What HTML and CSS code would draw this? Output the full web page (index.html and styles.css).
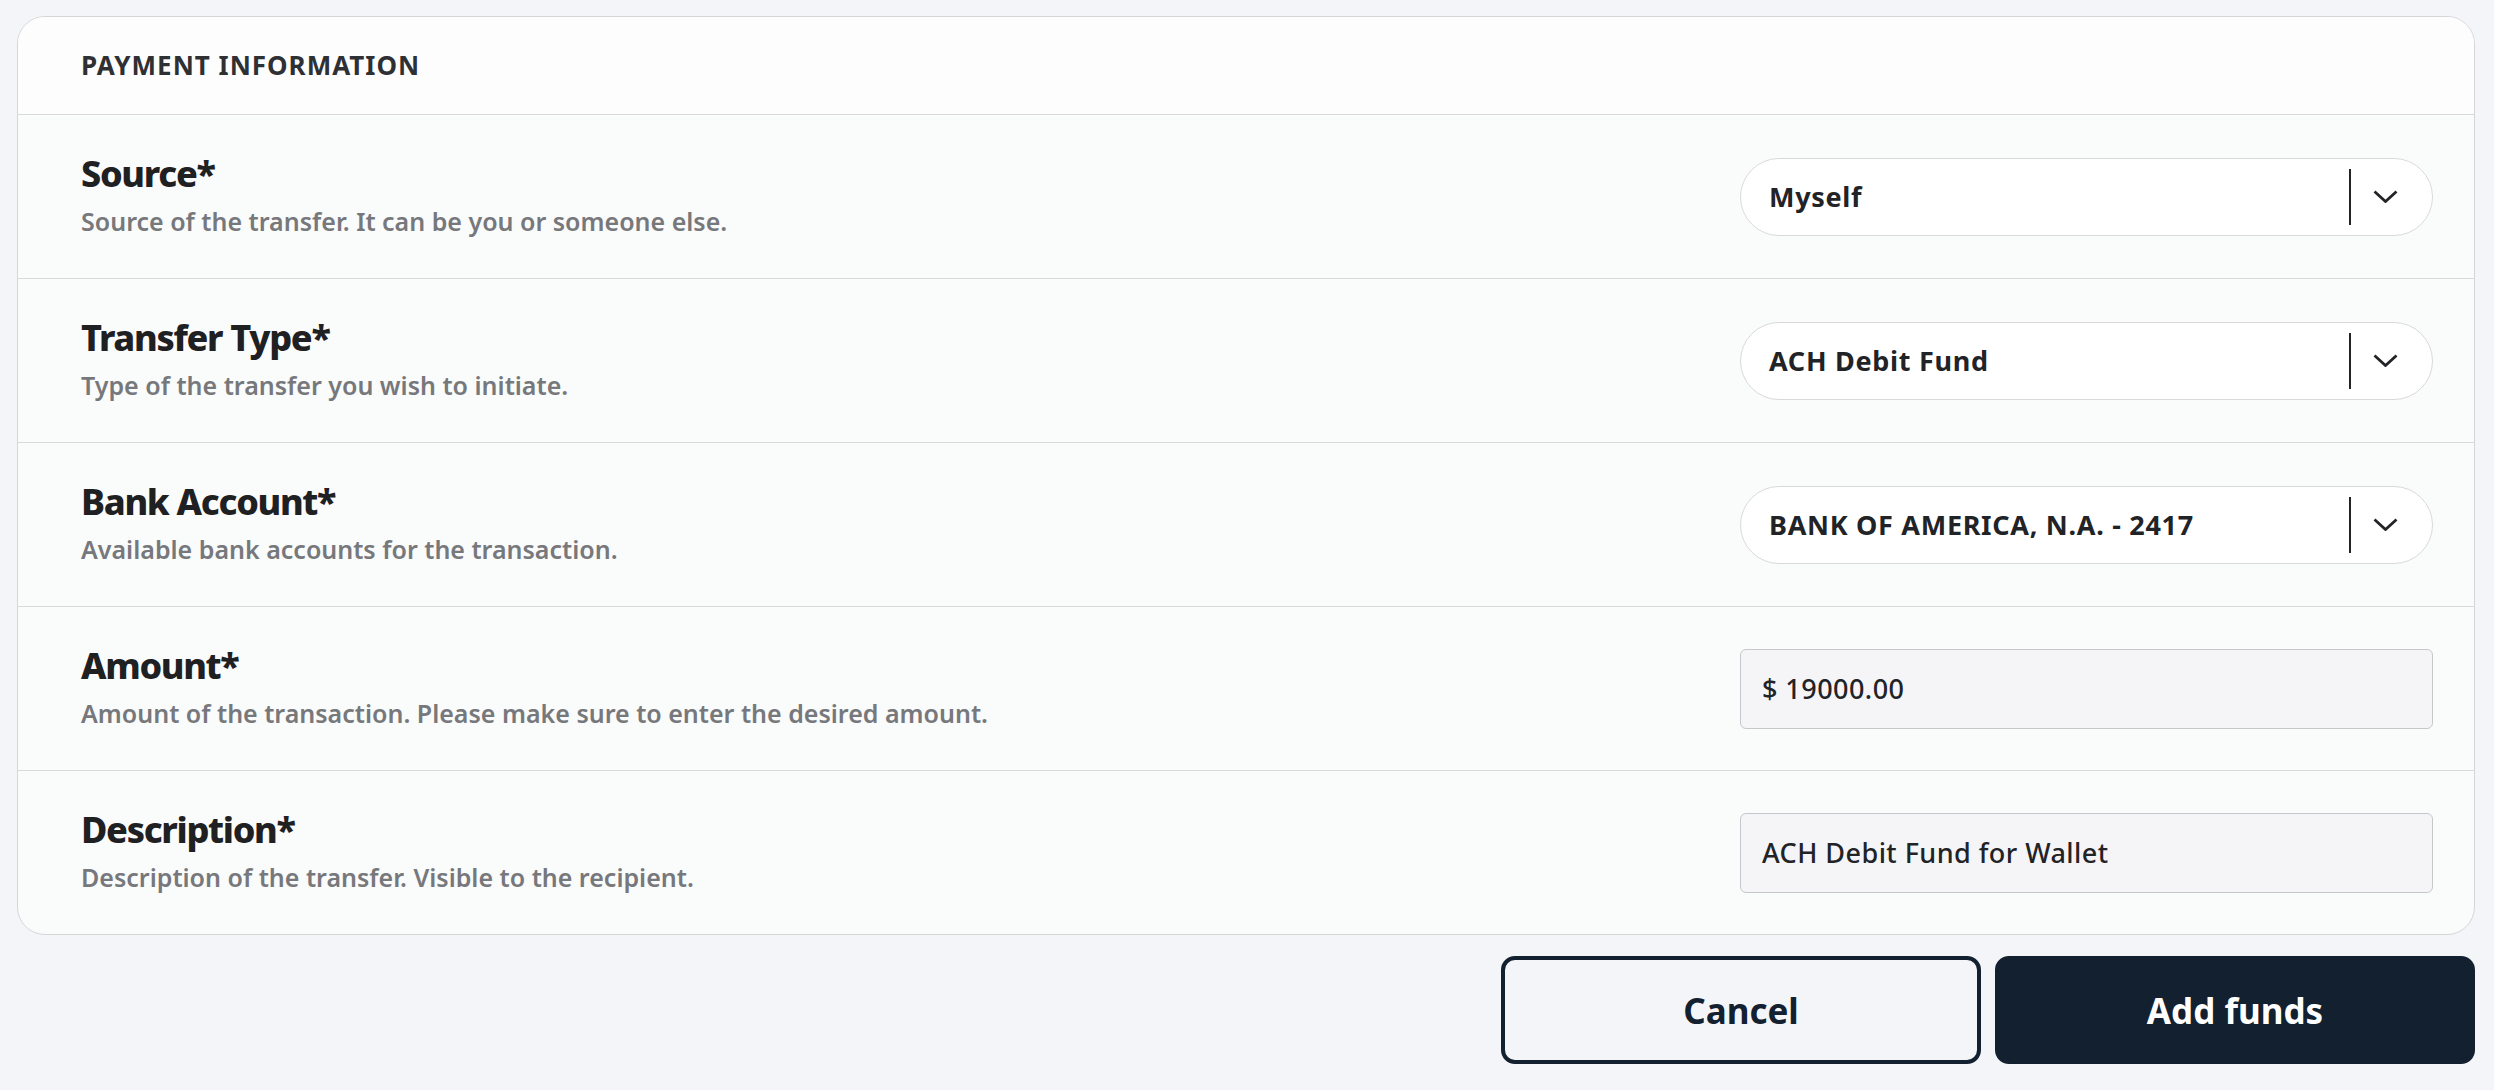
FILE: index.html
```html
<!DOCTYPE html>
<html lang="en">
<head>
	<meta charset="UTF-8">
	<title>Add funds</title>
	<link rel="stylesheet" href="styles.css">
</head>
<body>

<form class="payment-form">
	<section class="card">
		<header class="card-header">Payment information</header>

		<div class="field">
			<div class="field-info">
				<h3 class="field-title">Source*</h3>
				<p class="field-hint">Source of the transfer. It can be you or someone else.</p>
			</div>
			<div class="select">
				<span class="select-value">Myself</span>
				<span class="select-divider"></span>
				<svg class="select-arrow" width="25" height="13" viewBox="0 0 25 13"><path d="M1.5 1.5 L12.5 11.5 L23.5 1.5" /></svg>
			</div>
		</div>

		<div class="field">
			<div class="field-info">
				<h3 class="field-title">Transfer Type*</h3>
				<p class="field-hint">Type of the transfer you wish to initiate.</p>
			</div>
			<div class="select">
				<span class="select-value">ACH Debit Fund</span>
				<span class="select-divider"></span>
				<svg class="select-arrow" width="25" height="13" viewBox="0 0 25 13"><path d="M1.5 1.5 L12.5 11.5 L23.5 1.5" /></svg>
			</div>
		</div>

		<div class="field">
			<div class="field-info">
				<h3 class="field-title">Bank Account*</h3>
				<p class="field-hint">Available bank accounts for the transaction.</p>
			</div>
			<div class="select">
				<span class="select-value">BANK OF AMERICA, N.A. - 2417</span>
				<span class="select-divider"></span>
				<svg class="select-arrow" width="25" height="13" viewBox="0 0 25 13"><path d="M1.5 1.5 L12.5 11.5 L23.5 1.5" /></svg>
			</div>
		</div>

		<div class="field">
			<div class="field-info">
				<h3 class="field-title">Amount*</h3>
				<p class="field-hint">Amount of the transaction. Please make sure to enter the desired amount.</p>
			</div>
			<input class="text-input" type="text" name="amount" value="$ 19000.00" />
		</div>

		<div class="field">
			<div class="field-info">
				<h3 class="field-title">Description*</h3>
				<p class="field-hint">Description of the transfer. Visible to the recipient.</p>
			</div>
			<input class="text-input" type="text" name="description" value="ACH Debit Fund for Wallet" />
		</div>
	</section>

	<div class="actions">
		<button type="button" class="btn btn-outline">Cancel</button>
		<button type="submit" class="btn btn-primary">Add funds</button>
	</div>
</form>

</body>
</html>
```

FILE: styles.css
```css
html,
body {
    margin: 0;
    background: #f4f5f9;
    font-family: "Noto Sans", "Open Sans", sans-serif;
    color: #1f2022;
}
body {
    padding: 16px 19px 0 17px;
}
.card {
    background: #fafbfb;
    border: 1px solid #d6d6d6;
    border-radius: 28px;
    overflow: hidden;
}
.card-header {
    display: flex;
    align-items: center;
    height: 96px;
    padding: 0 63px 1px;
    background: #fdfdfd;
    border-bottom: 1px solid #dadada;
    font-size: 26px;
    font-weight: 700;
    letter-spacing: 1px;
    text-transform: uppercase;
    color: #2e3033;
}
.field {
    display: flex;
    align-items: center;
    justify-content: space-between;
    height: 163px;
    padding: 0 41px 0 63px;
    border-bottom: 1px solid #dadada;
}
.field:last-child {
    border-bottom: none;
}
.field-info {
    padding-bottom: 6px;
}
.field-title {
    margin: 0;
    font-size: 36px;
    line-height: 44px;
    font-weight: 800;
    letter-spacing: -1.3px;
    color: #1f2022;
}
.field-hint {
    margin: 10px 0 0;
    font-size: 25px;
    line-height: 30px;
    font-weight: 600;
    color: #77787b;
}
.select {
    display: flex;
    align-items: center;
    box-sizing: border-box;
    width: 693px;
    height: 78px;
    padding-left: 28px;
    background: #ffffff;
    border: 1px solid #d9d9d9;
    border-radius: 39px;
}
.select-value {
    flex: 1;
    font-size: 27px;
    font-weight: 700;
    letter-spacing: 0.7px;
    color: #222326;
}
.select-divider {
    width: 2px;
    height: 56px;
    background: #222326;
}
.select-arrow {
    margin: 0 34px 0 22px;
    fill: none;
    stroke: #222326;
    stroke-width: 2.8;
}
.text-input {
    box-sizing: border-box;
    width: 693px;
    height: 80px;
    padding: 0 21px;
    background: #f5f5f8;
    border: 1.5px solid #c6c7cb;
    border-radius: 6px;
    font-family: inherit;
    font-size: 27px;
    font-weight: 500;
    letter-spacing: 0.45px;
    color: #222326;
}
.actions {
    display: flex;
    justify-content: flex-end;
    gap: 14px;
    margin-top: 21px;
}
.btn {
    box-sizing: border-box;
    width: 480px;
    height: 108px;
    border: 4px solid #132030;
    border-radius: 14px;
    font-family: inherit;
    font-size: 35px;
    font-weight: 700;
    cursor: pointer;
}
.btn-outline {
    background: transparent;
    color: #132030;
}
.btn-primary {
    background: #132030;
    color: #ffffff;
}
```
